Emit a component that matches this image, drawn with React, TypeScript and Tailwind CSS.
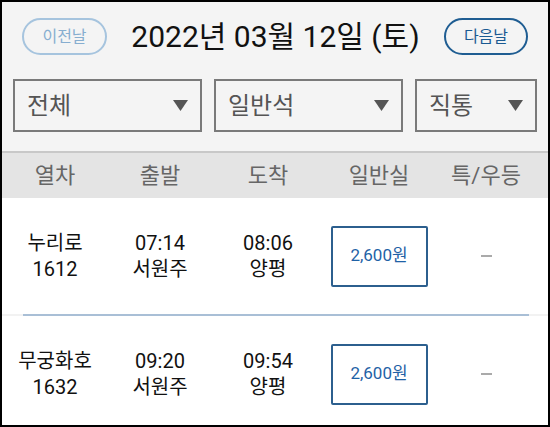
import React from "react";

const FONT = "font-['Roboto','Noto_Sans_CJK_KR',sans-serif]";

const COLS = "grid grid-cols-[106px_104px_112px_110px_104px]";

interface Train {
  name: string;
  no: string;
  dep: string;
  depStation: string;
  arr: string;
  arrStation: string;
  price: string;
}

const trains: Train[] = [
  { name: "누리로", no: "1612", dep: "07:14", depStation: "서원주", arr: "08:06", arrStation: "양평", price: "2,600원" },
  { name: "무궁화호", no: "1632", dep: "09:20", depStation: "서원주", arr: "09:54", arrStation: "양평", price: "2,600원" },
];

function Caret() {
  return (
    <svg width="15" height="11" viewBox="0 0 15 11">
      <path d="M0 0 H15 L7.5 11 Z" fill="#555" />
    </svg>
  );
}

function Select({ label, width }: { label: string; width: string }) {
  return (
    <div
      className={`${width} h-[53px] border-2 border-[#7a7a7a] flex items-center justify-between pl-[12px] pr-[12px] bg-[#f4f4f4]`}
    >
      <span className="text-[24px] text-[#555] leading-none">{label}</span>
      <Caret />
    </div>
  );
}

function Cell({ top, bottom }: { top: string; bottom: string }) {
  return (
    <div className="flex flex-col items-center justify-center text-[20px] leading-[26px] text-[#111]">
      <span>{top}</span>
      <span>{bottom}</span>
    </div>
  );
}

export default function App() {
  return (
    <div className={`w-[550px] h-[427px] border-2 border-black bg-white overflow-hidden flex flex-col ${FONT}`}>
      {/* date + filters */}
      <div className="bg-[#f4f4f4] h-[149px] shrink-0 pt-[16px]">
        <div className="flex items-center justify-between px-[20px]">
          <button className="w-[85px] h-[37px] rounded-full border-2 border-[#a6c4de] text-[#87aed0] text-[16px] leading-none">
            이전날
          </button>
          <div className="text-[30px] text-[#111] leading-none">2022년 03월 12일 (토)</div>
          <button className="w-[84px] h-[37px] rounded-full border-2 border-[#1f5d92] text-[#1a5a92] text-[16px] leading-none">
            다음날
          </button>
        </div>
        <div className="flex gap-[12px] pl-[11px] mt-[24px]">
          <Select label="전체" width="w-[189px]" />
          <Select label="일반석" width="w-[189px]" />
          <Select label="직통" width="w-[122px]" />
        </div>
      </div>

      {/* column header */}
      <div className={`${COLS} h-[47px] shrink-0 bg-[#e4e4e4] border-t-2 border-[#c8c8c8] items-center text-[22px] text-[#666] leading-none`}>
        <div className="text-center">열차</div>
        <div className="text-center">출발</div>
        <div className="text-center">도착</div>
        <div className="text-center">일반실</div>
        <div className="text-center">특/우등</div>
      </div>

      {/* rows */}
      {trains.map((t, i) => (
        <div key={i} className="shrink-0">
          <div className={`${COLS} h-[116px] items-center`}>
            <Cell top={t.name} bottom={t.no} />
            <Cell top={t.dep} bottom={t.depStation} />
            <Cell top={t.arr} bottom={t.arrStation} />
            <div className="flex justify-center">
              <div className="w-[97px] h-[61px] border-2 border-[#2c5f8e] rounded-[2px] flex items-center justify-center text-[17px] text-[#1f62a6]">
                {t.price}
              </div>
            </div>
            <div className="flex justify-center">
              <div className="w-[11px] h-[1.5px] bg-[#aaa]" />
            </div>
          </div>
          <div className="bg-[#f2f2f2] h-[2px]">
            <div className="h-[2px] bg-[#a9bfd6] ml-[21px] mr-[19px]" />
          </div>
        </div>
      ))}
    </div>
  );
}
